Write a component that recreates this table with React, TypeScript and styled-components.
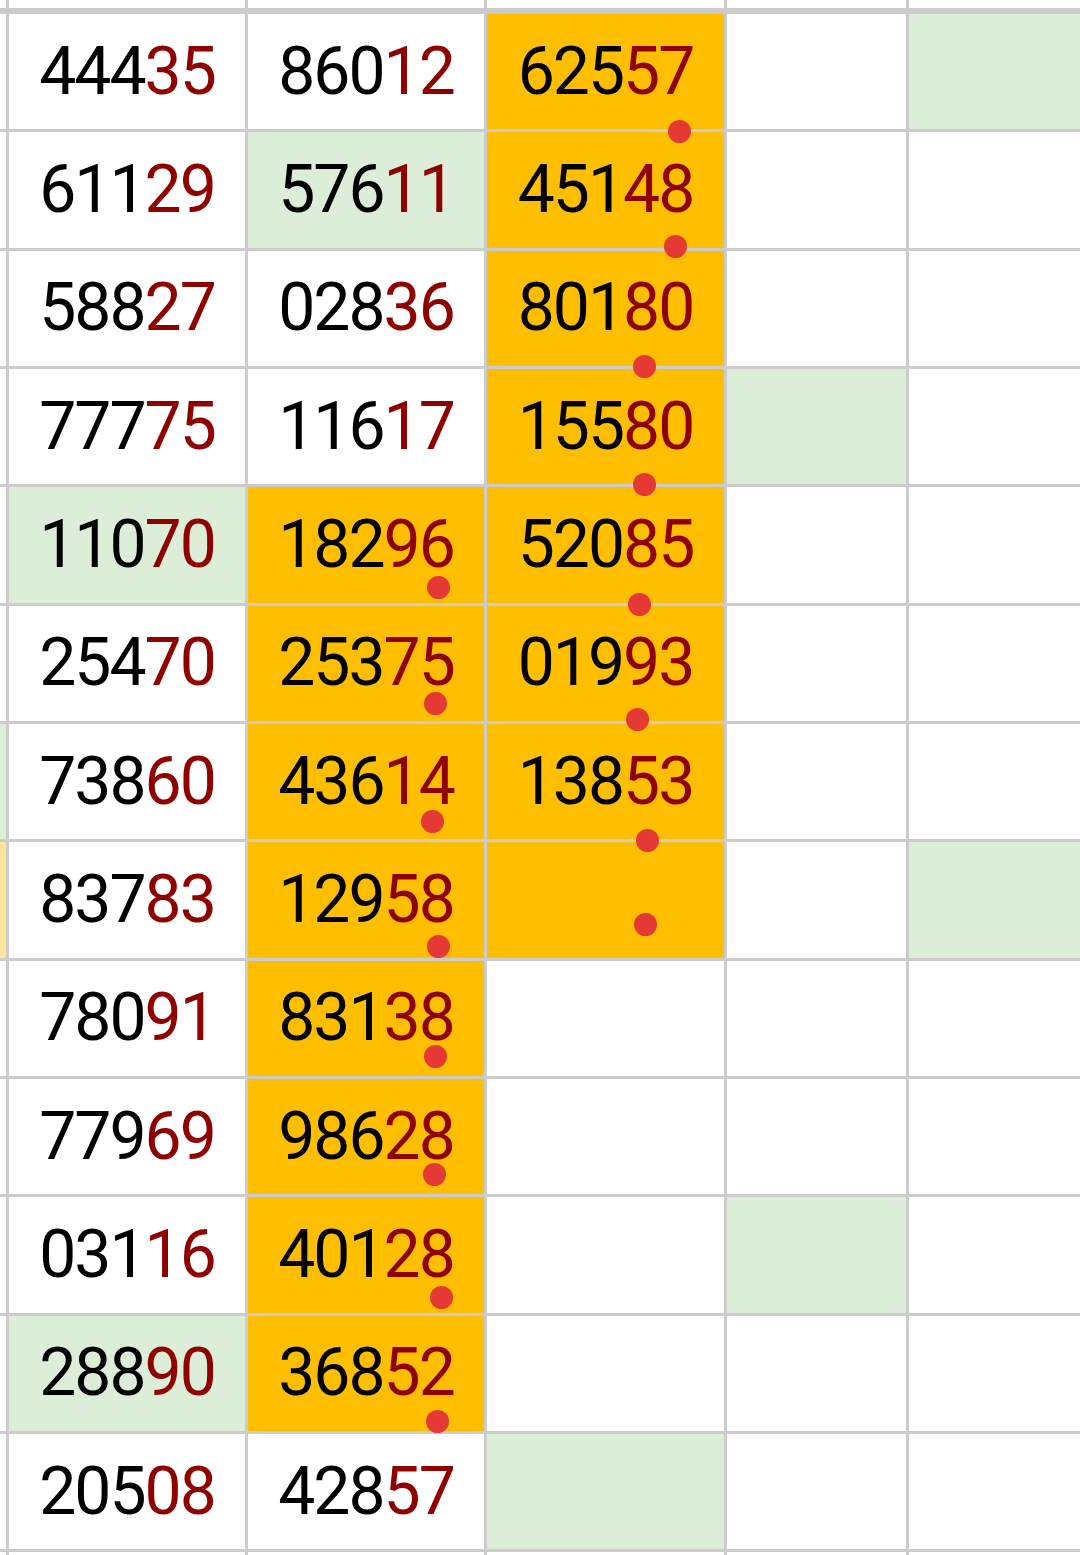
import { Fragment } from 'react';
import styled, { createGlobalStyle } from 'styled-components';

type Fill = 'white' | 'orange' | 'green' | 'yellow';

const fills: Record<Fill, string> = {
  white: '#ffffff',
  orange: '#ffbf00',
  green: '#ddeed8',
  yellow: '#ffe599',
};

const GlobalStyle = createGlobalStyle`
  html, body {
    margin: 0;
    padding: 0;
    background: #ffffff;
  }
  body {
    font-family: Roboto, "Noto Sans", sans-serif;
  }
`;

const Sheet = styled.div`
  position: relative;
  display: grid;
  grid-template-columns: 6px 236px 236px 237px 179px 1fr;
  grid-template-rows: 11px repeat(13, 115.33px) 12px;
  gap: 3px;
  width: 1080px;
  height: 1555px;
  overflow: hidden;
  background: #cccccc;
`;

const HeadCell = styled.div`
  height: 11px;
  box-sizing: border-box;
  background: #ffffff;
  border-bottom: 3px solid #cccccc;
`;

const Cell = styled.div<{ $fill: Fill }>`
  display: flex;
  align-items: center;
  justify-content: center;
  background: ${(p) => fills[p.$fill]};
  font-size: 66px;
  line-height: 1;
  letter-spacing: -2px;
  color: #000000;
  white-space: nowrap;
`;

const Tail = styled.span`
  color: #8f0000;
`;

const Dot = styled.span<{ $x: number; $y: number }>`
  position: absolute;
  left: ${(p) => p.$x - 11.5}px;
  top: ${(p) => p.$y - 11.5}px;
  width: 23px;
  height: 23px;
  border-radius: 50%;
  background: #e53935;
`;

type Row = { edge: Fill; cells: [string, Fill][] };

const rows: Row[] = [
  { edge: 'white', cells: [['44435', 'white'], ['86012', 'white'], ['62557', 'orange'], ['', 'white'], ['', 'green']] },
  { edge: 'white', cells: [['61129', 'white'], ['57611', 'green'], ['45148', 'orange'], ['', 'white'], ['', 'white']] },
  { edge: 'white', cells: [['58827', 'white'], ['02836', 'white'], ['80180', 'orange'], ['', 'white'], ['', 'white']] },
  { edge: 'white', cells: [['77775', 'white'], ['11617', 'white'], ['15580', 'orange'], ['', 'green'], ['', 'white']] },
  { edge: 'white', cells: [['11070', 'green'], ['18296', 'orange'], ['52085', 'orange'], ['', 'white'], ['', 'white']] },
  { edge: 'white', cells: [['25470', 'white'], ['25375', 'orange'], ['01993', 'orange'], ['', 'white'], ['', 'white']] },
  { edge: 'green', cells: [['73860', 'white'], ['43614', 'orange'], ['13853', 'orange'], ['', 'white'], ['', 'white']] },
  { edge: 'yellow', cells: [['83783', 'white'], ['12958', 'orange'], ['', 'orange'], ['', 'white'], ['', 'green']] },
  { edge: 'white', cells: [['78091', 'white'], ['83138', 'orange'], ['', 'white'], ['', 'white'], ['', 'white']] },
  { edge: 'white', cells: [['77969', 'white'], ['98628', 'orange'], ['', 'white'], ['', 'white'], ['', 'white']] },
  { edge: 'white', cells: [['03116', 'white'], ['40128', 'orange'], ['', 'white'], ['', 'green'], ['', 'white']] },
  { edge: 'white', cells: [['28890', 'green'], ['36852', 'orange'], ['', 'white'], ['', 'white'], ['', 'white']] },
  { edge: 'white', cells: [['20508', 'white'], ['42857', 'white'], ['', 'green'], ['', 'white'], ['', 'white']] },
];

// red marks drawn over the sheet
const dots: [number, number][] = [
  [679, 131], [675, 246], [644, 366], [644, 484],
  [438, 587], [639, 604], [435, 703], [637, 719],
  [432, 821], [647, 840], [645, 924], [438, 946],
  [435, 1056], [434, 1174], [441, 1297], [437, 1421],
];

const Value = ({ text }: { text: string }) =>
  text ? (
    <>
      {text.slice(0, 3)}
      <Tail>{text.slice(3)}</Tail>
    </>
  ) : null;

const App = () => (
  <>
    <GlobalStyle />
    <Sheet>
      {Array.from({ length: 6 }, (_, i) => (
        <HeadCell key={`h${i}`} />
      ))}
      {rows.map((row, r) => (
        <Fragment key={`r${r}`}>
          <Cell $fill={row.edge} />
          {row.cells.map(([text, fill], c) => (
            <Cell key={c} $fill={fill}>
              <Value text={text} />
            </Cell>
          ))}
        </Fragment>
      ))}
      {Array.from({ length: 6 }, (_, i) => (
        <Cell key={`t${i}`} $fill="white" />
      ))}
      {dots.map(([x, y], i) => (
        <Dot key={`d${i}`} $x={x} $y={y} />
      ))}
    </Sheet>
  </>
);

export default App;
